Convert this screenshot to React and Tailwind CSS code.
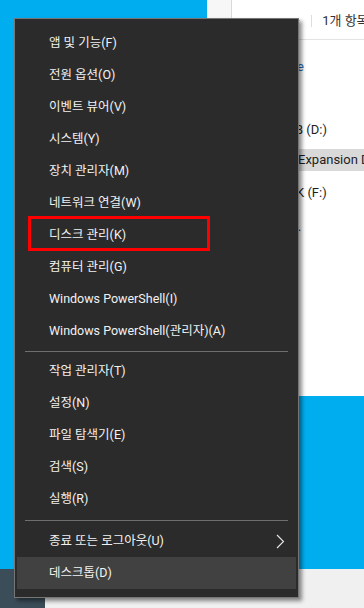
import React from "react";

const FONT = { fontFamily: 'Roboto, "Noto Sans CJK KR", sans-serif' };

const sections = [
  [
    "앱 및 기능(F)",
    "전원 옵션(O)",
    "이벤트 뷰어(V)",
    "시스템(Y)",
    "장치 관리자(M)",
    "네트워크 연결(W)",
    "디스크 관리(K)",
    "컴퓨터 관리(G)",
    "Windows PowerShell(I)",
    "Windows PowerShell(관리자)(A)",
  ],
  ["작업 관리자(T)", "설정(N)", "파일 탐색기(E)", "검색(S)", "실행(R)"],
  ["종료 또는 로그아웃(U)", "데스크톱(D)"],
];

const MenuRow = ({ label }) => {
  const active = label === "데스크톱(D)";
  const hasSub = label === "종료 또는 로그아웃(U)";
  const marked = label === "디스크 관리(K)";

  return (
    <div
      className={`relative mx-[2px] flex h-[32px] items-center pl-[32px] pr-[10px] text-[12.5px] text-[#f2f2f2] ${
        active ? "bg-[#414141]" : ""
      }`}
    >
      <span className="flex-1 whitespace-nowrap">{label}</span>
      {hasSub && (
        <svg width="9" height="15" viewBox="0 0 9 15" className="mr-[1px]">
          <polyline points="1,1 7.5,7.5 1,14" fill="none" stroke="#e8e8e8" strokeWidth="1.1" />
        </svg>
      )}
      {/* red highlight box drawn over the item */}
      {marked && (
        <div className="absolute -top-[3px] left-[11px] h-[35px] w-[182px] border-[3px] border-[#ff0000]" />
      )}
    </div>
  );
};

const Separator = ({ h }) => (
  <div className={`flex items-center px-[10px] ${h}`}>
    <div className="h-px w-full bg-[#6e6e6e]" />
  </div>
);

export default function App() {
  return (
    <div className="relative h-[608px] w-[364px] overflow-hidden bg-[#00adef]" style={FONT}>
      {/* explorer window behind the menu */}
      <div className="absolute left-[207px] top-0 flex h-[396px] w-[157px] overflow-hidden bg-white">
        <div className="w-[25px] shrink-0 border-r border-[#dadada] bg-[#f7f7f7]" />
        <div className="flex min-w-0 flex-1 flex-col overflow-hidden text-[12px] text-[#1e1e1e]">
          <div className="flex h-[40px] shrink-0 items-center border-b border-[#e3e3e3] pl-[65px] pt-[2px]">
            <span className="text-[#6a6a6a]">·</span>
            <div className="ml-[11px] h-[12px] w-px shrink-0 bg-[#dedede]" />
            <span className="ml-[10px] whitespace-nowrap text-[13px] text-[#333]">1개 항목</span>
          </div>
          <div className="flex flex-col">
            <div className="mt-[17px] flex h-[20px] items-center pl-[65px] text-[13px] text-[#1a6fc0]">e</div>
            <div className="mt-[43px] flex h-[20px] items-center whitespace-nowrap pl-[63px] text-[13px]">B (D:)</div>
            <div className="mt-[9px] flex h-[22px] items-center whitespace-nowrap bg-[#d9d9d9] pl-[66px] text-[13px]">
              Expansion D
            </div>
            <div className="mt-[12px] flex h-[20px] items-center whitespace-nowrap pl-[64px] text-[13px]">K (F:)</div>
            <div className="mt-[14px] flex h-[20px] items-center pl-[66px]">.</div>
          </div>
        </div>
      </div>

      {/* taskbar */}
      <div className="absolute bottom-0 left-0 flex h-[39px] w-full bg-[#f0f0f0]">
        <div className="w-[45px] bg-[#3b4d59]" />
      </div>

      {/* Win+X context menu */}
      <div className="absolute left-[14px] top-[18px] flex w-[285px] flex-col border border-[#767676] bg-[#2b2b2b] py-[8px] shadow-[3px_3px_4px_rgba(0,0,0,0.45)]">
        {sections[0].map((l) => (
          <MenuRow key={l} label={l} />
        ))}
        <Separator h="h-[8px]" />
        {sections[1].map((l) => (
          <MenuRow key={l} label={l} />
        ))}
        <Separator h="h-[10px]" />
        {sections[2].map((l) => (
          <MenuRow key={l} label={l} />
        ))}
      </div>
    </div>
  );
}
